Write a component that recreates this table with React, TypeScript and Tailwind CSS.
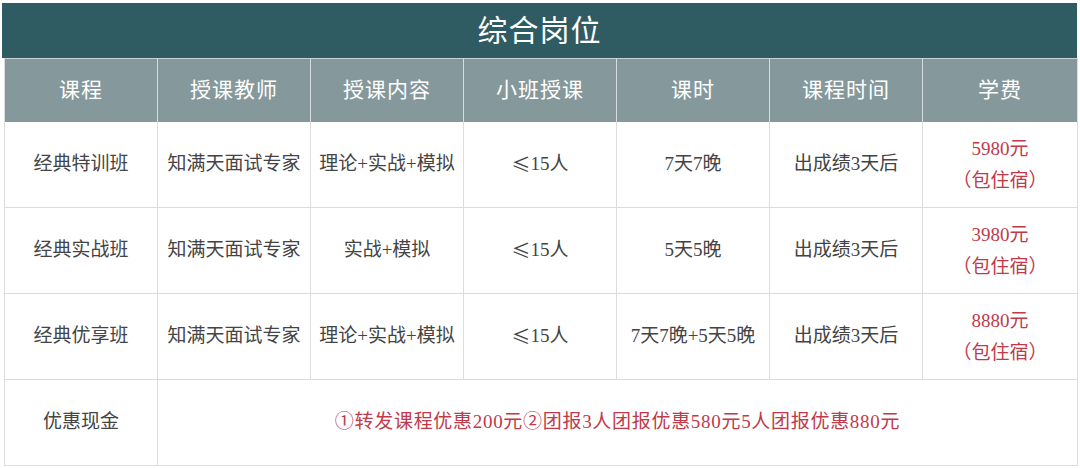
import React from "react";

const font = { fontFamily: '"Liberation Serif", "Noto Sans CJK SC", serif' };
const cjk = { fontFamily: '"Noto Sans CJK SC", serif' };

const headers = ["课程", "授课教师", "授课内容", "小班授课", "课时", "课程时间", "学费"];

const rows = [
  ["经典特训班", "知满天面试专家", "理论+实战+模拟", "≤15人", "7天7晚", "出成绩3天后", "5980元"],
  ["经典实战班", "知满天面试专家", "实战+模拟", "≤15人", "5天5晚", "出成绩3天后", "3980元"],
  ["经典优享班", "知满天面试专家", "理论+实战+模拟", "≤15人", "7天7晚+5天5晚", "出成绩3天后", "8880元"],
];

function Cell({ text }: { text: string }) {
  if (text.startsWith("≤")) {
    return (
      <>
        <span style={cjk}>≤</span>
        {text.slice(1)}
      </>
    );
  }
  return <>{text}</>;
}

export default function App() {
  return (
    <div className="w-[1080px] h-[468px] bg-white pt-[3px] pl-[2px] overflow-hidden" style={font}>
      <div className="w-[1075px] h-[55px] bg-[#2f5b63] flex items-center justify-center text-white text-[30px] tracking-[1px]">
        综合岗位
      </div>
      <div className="ml-[2px] w-[1073px] grid grid-cols-[153px_153px_153px_153px_153px_153px_155px] border-l border-[#dcdcdc]">
        {headers.map((h, i) => (
          <div
            key={h}
            className={`h-[64px] bg-[#85999c] flex items-center justify-center text-white text-[21px] tracking-[1px] border-t border-[#c9d3d4] ${
              i < 6 ? "border-r border-r-[#d4dcdd]" : "border-r border-r-[#dcdcdc]"
            }`}
          >
            {h}
          </div>
        ))}
        {rows.map((r) =>
          r.map((c, i) =>
            i === 6 ? (
              <div
                key={r[0] + i}
                className="h-[86px] flex flex-col items-center justify-center text-[#c03a4a] text-[19px] leading-[32px] border-r border-b border-[#dcdcdc]"
              >
                <span>{c}</span>
                <span>（包住宿）</span>
              </div>
            ) : (
              <div
                key={r[0] + i}
                className="h-[86px] flex items-center justify-center text-[#444444] text-[19px] border-r border-b border-[#dcdcdc] whitespace-nowrap"
              >
                <Cell text={c} />
              </div>
            )
          )
        )}
        <div className="h-[86px] flex items-center justify-center text-[#444444] text-[19px] border-r border-b border-[#dcdcdc]">
          优惠现金
        </div>
        <div className="col-span-6 h-[86px] flex items-center justify-center text-[#c03a4a] text-[19px] tracking-[0.7px] border-r border-b border-[#dcdcdc] whitespace-nowrap">
          ①转发课程优惠200元②团报3人团报优惠580元5人团报优惠880元
        </div>
      </div>
    </div>
  );
}
